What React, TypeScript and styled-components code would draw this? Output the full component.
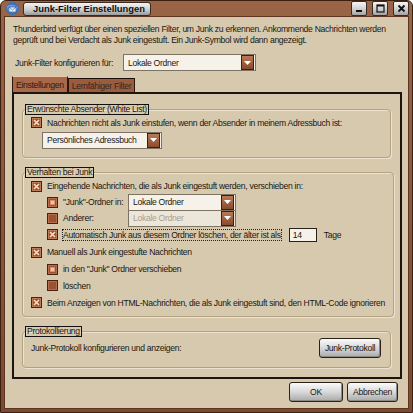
import styled, { createGlobalStyle } from "styled-components";

const Global = createGlobalStyle`
  html, body { margin: 0; padding: 0; }
  body {
    font-family: "Liberation Sans", Arial, sans-serif;
    font-size: 8.6px;
    letter-spacing: -0.3px;
    color: #1a1610;
  }
  #root { width: 413px; height: 413px; }
`;

const Win = styled.div`
  width: 413px;
  height: 413px;
  box-sizing: border-box;
  display: flex;
  flex-direction: column;
  background: linear-gradient(#9a6446, #7c4a2f);
  border: 1px solid #3d1f10;
  border-radius: 6px 6px 0 0;
  overflow: hidden;
`;

const TitleBar = styled.div`
  height: 22px;
  display: flex;
  align-items: center;
  padding: 0 3px 0 4px;
  gap: 3px;
`;

const TitlePill = styled.div`
  height: 14px;
  width: 128px;
  box-sizing: border-box;
  padding-left: 9px;
  display: flex;
  align-items: center;
  border-radius: 3px;
  border: 1px solid #3a2a20;
  background: linear-gradient(#f4f4f4, #c9c9c9 60%, #9a9a9a);
  font-weight: bold;
  font-size: 9.4px;
  letter-spacing: 0;
  white-space: nowrap;
  color: #111;
`;

const Spacer = styled.div`
  flex: 1;
`;

const TitleBtn = styled.div`
  width: 16px;
  height: 15px;
  box-sizing: border-box;
  border: 1px solid #3a2a20;
  border-radius: 2px;
  background: linear-gradient(#f6f6f6, #cfcfcf 55%, #a3a3a3);
  display: flex;
  align-items: center;
  justify-content: center;
  margin-left: 2px;
`;

const Client = styled.div`
  flex: 1;
  margin: 0 3px 4px 3px;
  background: #d6c9ae;
  border: 1px solid #5e3521;
  padding: 7px 6px 6px 7px;
  display: flex;
  flex-direction: column;
`;

const Para = styled.div`
  line-height: 11px;
  padding-left: 1px;
  white-space: nowrap;
`;

const ConfigRow = styled.div`
  display: flex;
  align-items: center;
  gap: 10px;
  margin-top: 8px;
  padding-left: 3px;
`;

const Tabs = styled.div`
  display: flex;
  align-items: flex-end;
  margin-top: 5px;
  height: 16px;
`;

const Tab = styled.div<{ $active?: boolean }>`
  height: ${(p) => (p.$active ? 16 : 14)}px;
  box-sizing: border-box;
  padding: 0 3px;
  display: flex;
  align-items: center;
  white-space: nowrap;
  background: ${(p) => (p.$active ? "#a8694a" : "#9a5c3e")};
  border: 1px solid #2a160c;
  border-bottom: none;
  border-top: 1px solid ${(p) => (p.$active ? "#e8c8a8" : "#1a0e08")};
  color: ${(p) => (p.$active ? "#2a1a10" : "#3a2418")};
`;

const Panel = styled.div`
  flex: 1;
  border: 2px solid #1e1410;
  padding: 10px 9px 9px 8px;
  display: flex;
  flex-direction: column;
  gap: 9px;
`;

const Group = styled.fieldset<{ $h: number }>`
  margin: 0;
  height: ${(p) => p.$h}px;
  box-sizing: border-box;
  border: 1px solid #b2a282;
  border-radius: 4px;
  padding: 0 8px;
  box-shadow: inset 1px 1px 0 #ece2cf, 1px 1px 0 #ece2cf;
`;

const Legend = styled.legend`
  border: 1px solid #111;
  padding: 0 1px;
  margin-left: -6px;
  line-height: 8px;
  height: 9px;
`;

const Row = styled.div<{ $indent?: number; $h?: number }>`
  display: flex;
  align-items: center;
  height: ${(p) => p.$h ?? 16}px;
  padding-left: ${(p) => p.$indent ?? 0}px;
  gap: 5px;
  white-space: nowrap;
`;

const Label = styled.span<{ $w?: number; $focus?: boolean }>`
  width: ${(p) => (p.$w ? `${p.$w}px` : "auto")};
  outline: ${(p) => (p.$focus ? "1px dotted #222" : "none")};
`;

const SelectBox = styled.div<{ $w: number; $disabled?: boolean }>`
  width: ${(p) => p.$w}px;
  height: 17px;
  box-sizing: border-box;
  border: 1px solid #7d7364;
  background: ${(p) => (p.$disabled ? "#ece6da" : "#f6f2ea")};
  display: flex;
  align-items: center;
  color: ${(p) => (p.$disabled ? "#a89e90" : "#1a1610")};
  padding-left: 4px;
  padding-right: 1px;
  white-space: nowrap;
`;

const SelectText = styled.span`
  flex: 1;
`;

const Arrow = styled.div`
  width: 13px;
  height: 15px;
  box-sizing: border-box;
  border: 1px solid #3e1e0e;
  background: linear-gradient(#b87a56, #8a4a2c);
  display: flex;
  align-items: center;
  justify-content: center;
`;

const NumInput = styled.div`
  width: 28px;
  height: 14px;
  box-sizing: border-box;
  border: 1px solid #2a2218;
  background: #f6f2ea;
  padding-left: 3px;
  display: flex;
  align-items: center;
  margin-left: 3px;
  margin-right: 2px;
`;

const Btn = styled.div<{ $w: number }>`
  width: ${(p) => p.$w}px;
  height: 20px;
  box-sizing: border-box;
  border: 1px solid #2a221a;
  border-radius: 3px;
  background: linear-gradient(#fbfbfb, #d8d8d8 50%, #a9a9a9);
  display: flex;
  align-items: center;
  justify-content: center;
  white-space: nowrap;
  color: #1a1610;
  box-shadow: inset -1px -1px 0 #8a8a8a;
`;

const Footer = styled.div`
  display: flex;
  justify-content: flex-end;
  gap: 4px;
  padding: 3px 4px 0 0;
`;

const ProtoRow = styled.div`
  display: flex;
  align-items: center;
  justify-content: space-between;
  padding-top: 1px;
  padding-right: 1px;
`;

const Check = ({ on }: { on?: boolean }) => (
  <svg width="11" height="11" viewBox="0 0 11 11" style={{ flexShrink: 0 }}>
    <rect x="0.5" y="0.5" width="10" height="10" fill="#9a5234" stroke="#4a2212" />
    <rect x="1.5" y="1.5" width="8" height="8" fill="none" stroke="#c07a55" />
    {on && <path d="M3 3 L8 8 M8 3 L3 8" stroke="#f2e2cc" strokeWidth="1.6" />}
  </svg>
);

const Radio = ({ on }: { on?: boolean }) => (
  <svg width="11" height="11" viewBox="0 0 11 11" style={{ flexShrink: 0 }}>
    <rect x="0.5" y="0.5" width="10" height="10" fill="#9a5234" stroke="#4a2212" />
    <rect x="1.5" y="1.5" width="8" height="8" fill="none" stroke="#b86e4a" />
    {on && <rect x="3.5" y="3.5" width="4" height="4" fill="#f0c8a8" stroke="#d89070" />}
  </svg>
);

const Tri = () => (
  <svg width="7" height="4" viewBox="0 0 7 4">
    <path d="M0 0 H7 L3.5 4 Z" fill="#fff" />
  </svg>
);

const Select = ({ w, text, disabled }: { w: number; text: string; disabled?: boolean }) => (
  <SelectBox $w={w} $disabled={disabled}>
    <SelectText>{text}</SelectText>
    <Arrow>
      <Tri />
    </Arrow>
  </SelectBox>
);

const AppIcon = () => (
  <svg width="15" height="15" viewBox="0 0 15 15">
    <circle cx="7.5" cy="7.5" r="6.5" fill="#3d6fb8" />
    <path d="M2 5 Q7 2 13 6 L11 11 Q6 13 3 10 Z" fill="#6ea0e0" />
    <rect x="4" y="6" width="7" height="5" fill="#e8eef8" stroke="#2a4a80" strokeWidth="0.6" />
    <path d="M4 6 L7.5 9 L11 6" fill="none" stroke="#2a4a80" strokeWidth="0.6" />
  </svg>
);

export default function App() {
  return (
    <>
      <Global />
      <Win>
        <TitleBar>
          <AppIcon />
          <TitlePill>Junk-Filter Einstellungen</TitlePill>
          <Spacer />
          <TitleBtn>
            <svg width="8" height="8" viewBox="0 0 8 8"><rect x="1" y="5" width="6" height="2" fill="#111" /></svg>
          </TitleBtn>
          <TitleBtn>
            <svg width="9" height="9" viewBox="0 0 9 9"><rect x="1" y="1" width="7" height="7" fill="none" stroke="#111" strokeWidth="1.2" /><rect x="1" y="1" width="7" height="1.5" fill="#111" /></svg>
          </TitleBtn>
          <TitleBtn>
            <svg width="9" height="9" viewBox="0 0 9 9"><path d="M1.5 1.5 L7.5 7.5 M7.5 1.5 L1.5 7.5" stroke="#111" strokeWidth="1.8" /></svg>
          </TitleBtn>
        </TitleBar>
        <Client>
          <Para>
            Thunderbird verfügt über einen speziellen Filter, um Junk zu erkennen. Ankommende Nachrichten werden
            <br />
            geprüft und bei Verdacht als Junk eingestuft. Ein Junk-Symbol wird dann angezeigt.
          </Para>
          <ConfigRow>
            <span>Junk-Filter konfigurieren für:</span>
            <Select w={133} text="Lokale Ordner" />
          </ConfigRow>
          <Tabs>
            <Tab $active>Einstellungen</Tab>
            <Tab>Lernfähiger Filter</Tab>
          </Tabs>
          <Panel>
            <Group $h={54}>
              <Legend>Erwünschte Absender (White List)</Legend>
              <Row $h={15}>
                <Check on />
                <span>Nachrichten nicht als Junk einstufen, wenn der Absender in meinem Adressbuch ist:</span>
              </Row>
              <Row $h={20} $indent={11}>
                <Select w={120} text="Persönliches Adressbuch" />
              </Row>
            </Group>
            <Group $h={150}>
              <Legend>Verhalten bei Junk</Legend>
              <Row $h={16}>
                <Check on />
                <span>Eingehende Nachrichten, die als Junk eingestuft werden, verschieben in:</span>
              </Row>
              <Row $indent={16}>
                <Radio on />
                <Label $w={60}>"Junk"-Ordner in:</Label>
                <Select w={108} text="Lokale Ordner" />
              </Row>
              <Row $indent={16}>
                <Radio />
                <Label $w={60}>Anderer:</Label>
                <Select w={108} text="Lokale Ordner" disabled />
              </Row>
              <Row $indent={16} $h={17}>
                <Check on />
                <Label $focus>Automatisch Junk aus diesem Ordner löschen, der älter ist als</Label>
                <NumInput>14</NumInput>
                <span>Tage</span>
              </Row>
              <Row $h={18}>
                <Check on />
                <span>Manuell als Junk eingestufte Nachrichten</span>
              </Row>
              <Row $indent={16}>
                <Radio on />
                <span>in den "Junk" Ordner verschieben</span>
              </Row>
              <Row $indent={16} $h={17}>
                <Radio />
                <span>löschen</span>
              </Row>
              <Row $h={17}>
                <Check on />
                <span>Beim Anzeigen von HTML-Nachrichten, die als Junk eingestuft sind, den HTML-Code ignorieren</span>
              </Row>
            </Group>
            <Group $h={42}>
              <Legend>Protokollierung</Legend>
              <ProtoRow>
                <span>Junk-Protokoll konfigurieren und anzeigen:</span>
                <Btn $w={62}>Junk-Protokoll</Btn>
              </ProtoRow>
            </Group>
          </Panel>
          <Footer>
            <Btn $w={54}>OK</Btn>
            <Btn $w={51}>Abbrechen</Btn>
          </Footer>
        </Client>
      </Win>
    </>
  );
}
